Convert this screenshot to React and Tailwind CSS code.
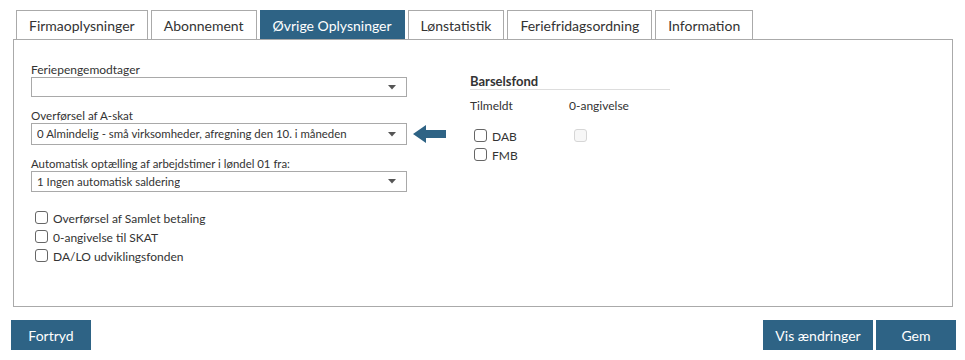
const TABS = ['Firmaoplysninger', 'Abonnement', 'Øvrige Oplysninger', 'Lønstatistik', 'Feriefridagsordning', 'Information']

function Caret() {
  return (
    <svg width="8" height="5" viewBox="0 0 8 5" className="shrink-0">
      <path d="M0 0 H8 L4 4.5 Z" fill="#555" />
    </svg>
  )
}

function Select({ value, h = 'h-[21px]' }) {
  return (
    <div className={`w-[376px] ${h} border border-[#a9a9a9] bg-white flex items-center justify-between pl-[5px] pr-[10px] text-[11.4px] text-[#333]`}>
      <span className="truncate">{value}</span>
      <Caret />
    </div>
  )
}

function Box({ disabled }) {
  return (
    <span
      className={
        disabled
          ? 'w-[13px] h-[13px] rounded-[3px] border border-[#d6d6d6] bg-[#f7f7f7] shrink-0'
          : 'w-[13px] h-[13px] rounded-[3px] border border-[#666] bg-white shrink-0'
      }
    />
  )
}

function Check({ label }) {
  return (
    <div className="h-[19px] flex items-center gap-[5px] text-[12px] text-[#333]">
      <Box />
      <span className="pt-[2px]">{label}</span>
    </div>
  )
}

export default function App() {
  return (
    <div className="w-[965px] h-[360px] bg-white font-['Lato','Liberation_Sans',sans-serif] text-[#333] overflow-hidden">
      {/* TABS */}
      <div className="flex gap-[3px] pt-[10px] pl-[16px]">
        {TABS.map((t, i) => (
          <div
            key={t}
            className={
              i === 2
                ? 'h-[29px] px-[12px] flex items-center text-[14px] bg-[#2e6385] text-white border border-[#2e6385] border-b-0'
                : 'h-[29px] px-[12px] flex items-center text-[14px] text-[#333] bg-white border border-[#aaa] border-b-0'
            }
          >
            {t}
          </div>
        ))}
      </div>

      {/* PANEL */}
      <div className="ml-[13px] w-[940px] h-[268px] border border-[#aaa] flex pl-[17px]">
        <div className="flex flex-col pt-[22px]">
          <div className="text-[12px] leading-[15px]">Feriepengemodtager</div>
          <Select value="" h="h-[20px]" />

          <div className="mt-[11px] text-[11.6px] leading-[15px]">Overførsel af A-skat</div>
          <div className="flex items-center">
            <Select value="0 Almindelig - små virksomheder, afregning den 10. i måneden" h="h-[22px]" />
            <svg width="33" height="18" viewBox="0 0 33 18" className="ml-[6px] -mt-[1px]">
              <path d="M0 9 L13 0 L13 5 L33 5 L33 13 L13 13 L13 18 Z" fill="#2e6385" />
            </svg>
          </div>

          <div className="mt-[11px] text-[11.4px] leading-[15px]">Automatisk optælling af arbejdstimer i løndel 01 fra:</div>
          <Select value="1 Ingen automatisk saldering" />

          <div className="mt-[16px] pl-[4px] flex flex-col">
            <Check label="Overførsel af Samlet betaling" />
            <Check label="0-angivelse til SKAT" />
            <Check label="DA/LO udviklingsfonden" />
          </div>
        </div>

        <div className="ml-[24px] pt-[33px] w-[200px]">
          <div className="h-[17px] border-b border-[#ddd] text-[13px] leading-[16px] font-bold">Barselsfond</div>
          <div className="mt-[8px] flex text-[12px] leading-[15px]">
            <span className="w-[99px]">Tilmeldt</span>
            <span>0-angivelse</span>
          </div>
          <div className="mt-[13px] flex">
            <div className="w-[99px] pl-[4px] flex flex-col">
              <Check label="DAB" />
              <Check label="FMB" />
            </div>
            <div className="pl-[5px] h-[19px] flex items-center">
              <Box disabled />
            </div>
          </div>
        </div>
      </div>

      {/* BUTTONS */}
      <div className="mt-[13px] px-[11px] flex justify-between">
        <button className="w-[80px] h-[30px] bg-[#2e6385] text-white text-[14px]">Fortryd</button>
        <div className="flex gap-[3px] mr-[-2px]">
          <button className="w-[110px] h-[30px] bg-[#2e6385] text-white text-[14px]">Vis ændringer</button>
          <button className="w-[80px] h-[30px] bg-[#2e6385] text-white text-[14px]">Gem</button>
        </div>
      </div>
    </div>
  )
}
